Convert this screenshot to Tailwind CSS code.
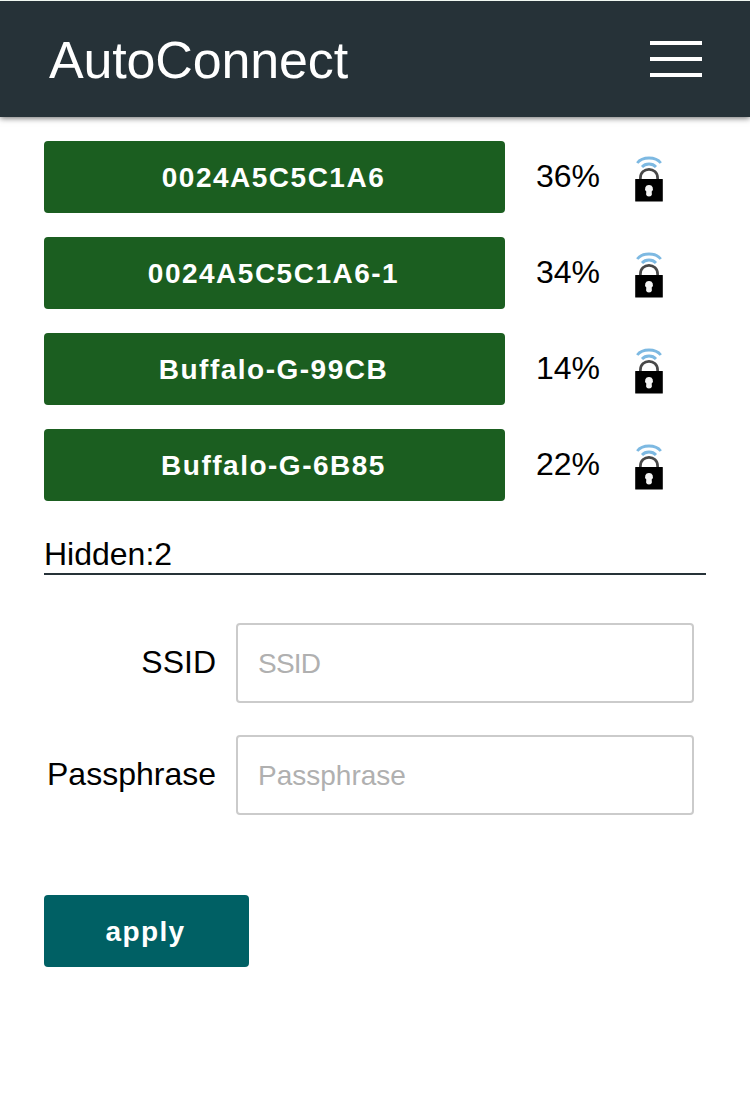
<!DOCTYPE html>
<html lang="en">
<head>
<meta charset="utf-8">
<title>AutoConnect</title>
<script src="https://cdn.jsdelivr.net/npm/@tailwindcss/browser@4"></script>
</head>
<body class="bg-white text-black font-['Liberation_Sans',Arial,sans-serif] h-[1106px] overflow-hidden">
<svg class="hidden">
  <symbol id="lock" viewBox="0 0 32 48">
    <g fill="none" stroke="#7db9e2" stroke-width="2.8">
      <path d="M4.200 8C9.500 1.300 22.500 1.300 27.800 8"/>
      <path d="M9 12C12.500 8 19.500 8 23 12"/>
    </g>
    <path d="M7.400 25V23C7.400 11.500 24.600 11.500 24.600 23V25" fill="none" stroke="#484848" stroke-width="2.700"/>
    <rect x="2.200" y="24" width="27.600" height="22.600" rx=".5" fill="#000"/>
    <path d="M16 30a3.800 3.800 0 0 1 2.700 6.600L18.900 39.500Q18.600 41.500 16 41.500T13.100 39.500L13.300 36.600A3.800 3.800 0 0 1 16 30Z" fill="#f4f4f4"/>
  </symbol>
</svg>
<header class="h-[117px] bg-[#263238] border-t border-[#f1f8f2] shadow-[0_1px_6px_rgba(0,0,0,0.6)] flex justify-between items-center pl-[49px] pr-12">
  <h1 class="text-[52px] leading-[60px] text-white pt-0.5 tracking-[-0.15px]">AutoConnect</h1>
  <div class="flex flex-col gap-3 w-[52px]">
    <span class="h-1 bg-white"></span>
    <span class="h-1 bg-white"></span>
    <span class="h-1 bg-white"></span>
  </div>
</header>
<main class="pl-11 pr-11 pt-6">
  <div class="flex flex-col gap-6">
    <div class="flex items-center h-[72px]">
      <button class="w-[461px] h-[72px] rounded bg-[#1b5e20] pt-0.5 pr-0.5 text-white text-[28px] font-bold tracking-[1.5px]">0024A5C5C1A6</button>
      <span class="ml-[31px] w-16 text-[32px] leading-9 pb-[3px]">36%</span>
      <svg class="ml-[33px] mt-1 w-8 h-12"><use href="#lock"/></svg>
    </div>
    <div class="flex items-center h-[72px]">
      <button class="w-[461px] h-[72px] rounded bg-[#1b5e20] pt-0.5 pr-0.5 text-white text-[28px] font-bold tracking-[1.5px]">0024A5C5C1A6-1</button>
      <span class="ml-[31px] w-16 text-[32px] leading-9 pb-[3px]">34%</span>
      <svg class="ml-[33px] mt-1 w-8 h-12"><use href="#lock"/></svg>
    </div>
    <div class="flex items-center h-[72px]">
      <button class="w-[461px] h-[72px] rounded bg-[#1b5e20] pt-0.5 pr-0.5 text-white text-[28px] font-bold tracking-[1.5px]">Buffalo-G-99CB</button>
      <span class="ml-[31px] w-16 text-[32px] leading-9 pb-[3px]">14%</span>
      <svg class="ml-[33px] mt-1 w-8 h-12"><use href="#lock"/></svg>
    </div>
    <div class="flex items-center h-[72px]">
      <button class="w-[461px] h-[72px] rounded bg-[#1b5e20] pt-0.5 pr-0.5 text-white text-[28px] font-bold tracking-[1.5px]">Buffalo-G-6B85</button>
      <span class="ml-[31px] w-16 text-[32px] leading-9 pb-[3px]">22%</span>
      <svg class="ml-[33px] mt-1 w-8 h-12"><use href="#lock"/></svg>
    </div>
  </div>
  <div class="mt-[35px] h-[39px] border-b-2 border-[#263238] text-[32px] leading-9">Hidden:2</div>
  <div class="mt-12 flex flex-col gap-8">
    <div class="flex items-center h-20">
      <label for="ssid" class="w-[172px] text-right text-[32px] leading-9 pb-0.5">SSID</label>
      <input id="ssid" placeholder="SSID" class="ml-5 w-[458px] h-20 border-2 border-[#cbcbcb] rounded px-5 pt-0.5 text-[28px] tracking-[-0.8px] placeholder:text-[#b0b0b0]">
    </div>
    <div class="flex items-center h-20">
      <label for="pass" class="w-[172px] text-right text-[32px] leading-9 pb-0.5">Passphrase</label>
      <input id="pass" placeholder="Passphrase" class="ml-5 w-[458px] h-20 border-2 border-[#cbcbcb] rounded px-5 pt-0.5 text-[28px] placeholder:text-[#b0b0b0]">
    </div>
  </div>
  <button class="mt-20 block w-[205px] h-[72px] rounded bg-[#006064] pt-0.5 pr-0.5 text-white text-[28px] font-bold tracking-[1.4px]">apply</button>
</main>
</body>
</html>
